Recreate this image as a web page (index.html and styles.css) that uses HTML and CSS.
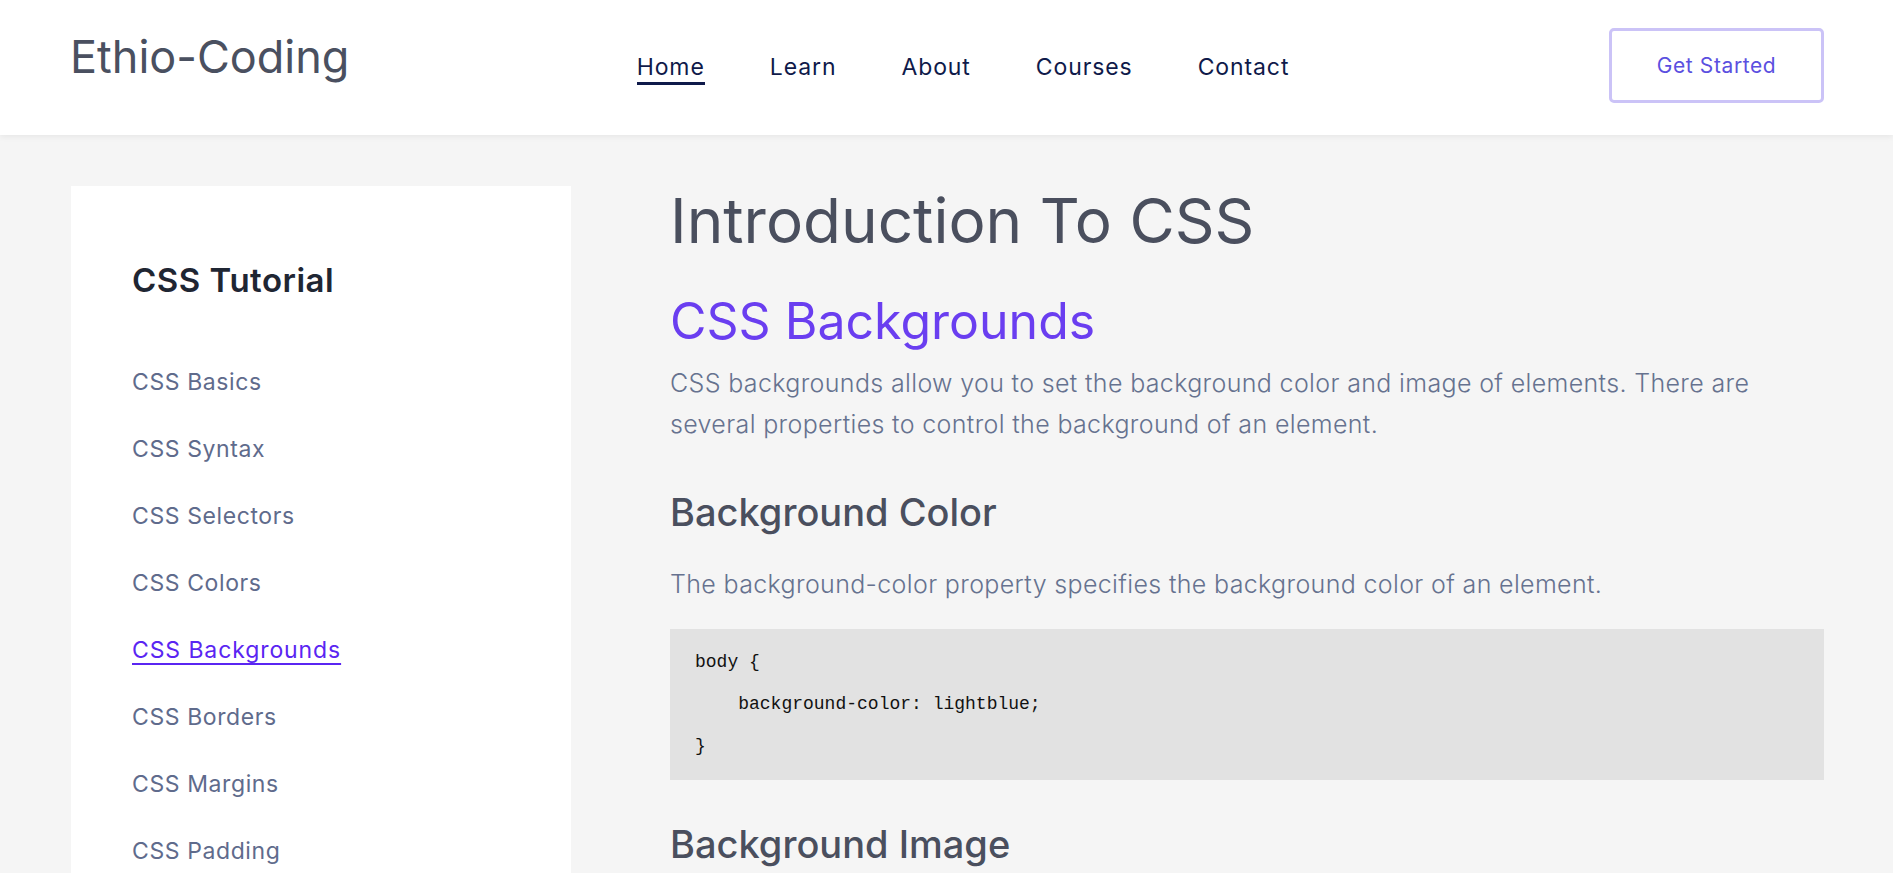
FILE: index.html
```html
<!DOCTYPE html>
<html lang="en">
<head>
<meta charset="utf-8">
<title>Ethio-Coding | CSS Backgrounds</title>
<link rel="stylesheet" href="styles.css">
</head>
<body>
<header class="site-header">
  <div class="brand"><a href="#" class="logo">Ethio-Coding</a></div>
  <nav class="main-nav">
    <a href="#" class="nav-link active">Home</a>
    <a href="#" class="nav-link">Learn</a>
    <a href="#" class="nav-link">About</a>
    <a href="#" class="nav-link">Courses</a>
    <a href="#" class="nav-link">Contact</a>
  </nav>
  <div class="header-actions"><a href="#" class="btn-outline">Get Started</a></div>
</header>

<div class="page">
  <aside class="sidebar">
    <h2 class="sidebar-title">CSS Tutorial</h2>
    <ul class="side-list">
      <li><a href="#" class="side-link">CSS Basics</a></li>
      <li><a href="#" class="side-link">CSS Syntax</a></li>
      <li><a href="#" class="side-link">CSS Selectors</a></li>
      <li><a href="#" class="side-link">CSS Colors</a></li>
      <li><a href="#" class="side-link current">CSS Backgrounds</a></li>
      <li><a href="#" class="side-link">CSS Borders</a></li>
      <li><a href="#" class="side-link">CSS Margins</a></li>
      <li><a href="#" class="side-link">CSS Padding</a></li>
      <li><a href="#" class="side-link">CSS Height/Width</a></li>
      <li><a href="#" class="side-link">CSS Box Model</a></li>
    </ul>
  </aside>

  <main class="content">
    <h1 class="page-title">Introduction To CSS</h1>
    <h2 class="section-title">CSS Backgrounds</h2>
    <p class="text">CSS backgrounds allow you to set the background color and image of elements. There are several properties to control the background of an element.</p>

    <h3 class="sub-title">Background Color</h3>
    <p class="text text-gap">The background-color property specifies the background color of an element.</p>
<pre class="code">body {
    background-color: lightblue;
}</pre>

    <h3 class="sub-title sub-title-gap">Background Image</h3>
    <p class="text text-gap">The background-image property specifies an image to use as the background of an element.</p>
  </main>
</div>
</body>
</html>
```

FILE: styles.css
```css
* {
  box-sizing: border-box;
}

body {
  margin: 0;
  background: #f5f5f5;
  font-family: "Inter", "Noto Sans", sans-serif;
  color: #4a4f5e;
}

a {
  text-decoration: none;
}

.site-header {
  height: 135px;
  background: #ffffff;
  display: flex;
  align-items: center;
  padding: 0 69px 0 70px;
  box-shadow: 0 2px 6px rgba(0, 0, 0, 0.06);
}

.brand {
  flex: 1;
  margin-bottom: 22px;
}

.logo {
  font-size: 45px;
  font-weight: 400;
  color: #4a5060;
}

.main-nav {
  display: flex;
  gap: 65px;
  margin-left: 32px;
  margin-top: 2px;
}

.nav-link {
  font-size: 23px;
  letter-spacing: 0.9px;
  color: #0f1a4a;
  padding-bottom: 1px;
  border-bottom: 3px solid transparent;
}

.nav-link.active {
  border-bottom-color: #0f1a4a;
}

.header-actions {
  flex: 1;
  display: flex;
  justify-content: flex-end;
  margin-bottom: 4px;
}

.btn-outline {
  width: 215px;
  height: 75px;
  display: flex;
  align-items: center;
  justify-content: center;
  border: 3px solid #cbc3f7;
  border-radius: 5px;
  color: #5b4fe0;
  font-size: 21px;
  letter-spacing: 0.6px;
}

.page {
  display: flex;
  gap: 99px;
  padding: 51px 69px 0 71px;
}

.sidebar {
  width: 500px;
  flex-shrink: 0;
  background: #ffffff;
  padding: 75px 60px 40px 61px;
}

.sidebar-title {
  margin: 0;
  font-size: 33px;
  letter-spacing: 0.5px;
  line-height: 38px;
  font-weight: 600;
  color: #1f2633;
}

.side-list {
  list-style: none;
  margin: 49px 0 0;
  padding: 0;
}

.side-list li {
  height: 67px;
  display: flex;
  align-items: center;
}

.side-link {
  font-size: 23px;
  letter-spacing: 0.6px;
  color: #5f6b8c;
}

.side-link.current {
  color: #5a25f2;
  letter-spacing: 0.9px;
  text-decoration: underline;
  text-underline-offset: 5px;
  text-decoration-thickness: 2px;
}

.content {
  flex: 1;
  min-width: 0;
}

.page-title {
  margin: -1px 0 0;
  font-size: 62px;
  line-height: 72px;
  font-weight: 400;
  color: #4a4f5e;
}

.section-title {
  margin: 35px 0 0;
  font-size: 50px;
  line-height: 58px;
  font-weight: 400;
  color: #6a3ef0;
}

.text {
  margin: 13px 0 0;
  font-size: 25px;
  letter-spacing: 0.35px;
  line-height: 41px;
  font-weight: 300;
  color: #66728f;
}

.sub-title {
  margin: 46px 0 0;
  font-size: 38px;
  line-height: 43px;
  font-weight: 500;
  color: #4a4f5e;
}

.text-gap {
  margin-top: 30px;
}

.code {
  margin: 24px 0 0;
  background: #e2e2e2;
  padding: 12px 25px 13px;
  font-family: "Liberation Mono", "DejaVu Sans Mono", monospace;
  font-size: 18px;
  line-height: 42px;
  color: #111111;
}

.sub-title-gap {
  margin-top: 43px;
}
```
